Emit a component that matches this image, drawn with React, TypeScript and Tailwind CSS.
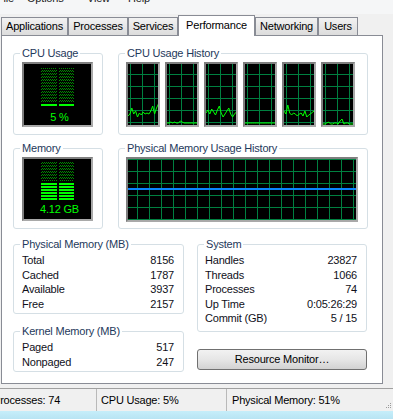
import React from "react";

const TABS = [
  { label: "Applications", w: "w-[67px]" },
  { label: "Processes", w: "w-[60px]" },
  { label: "Services", w: "w-[50px]" },
  { label: "Performance", w: "w-[77px]", active: true },
  { label: "Networking", w: "w-[63px]" },
  { label: "Users", w: "w-[40px]" },
];

const MENU = [
  { label: "File", w: "w-[30px]" },
  { label: "Options", w: "w-[60px]" },
  { label: "View", w: "w-[41px]" },
  { label: "Help", w: "w-[40px]" },
];

// y values (inside a 30x61 graph) for each logical CPU
const CPU_HISTORY = [
  [52, 50, 44, 50, 47, 53, 49, 51, 48, 50, 49, 50, 47, 42, 50, 44, 40],
  [59, 59, 58, 59, 58, 59, 59, 57, 58, 59, 59, 59, 59, 59, 59, 59, 59],
  [49, 46, 50, 45, 48, 51, 46, 42, 49, 53, 50, 47, 44, 50, 53, 50, 48],
  [59, 59, 59, 59, 59, 59, 59, 59, 59, 59, 59, 59, 59, 59, 59, 59, 59],
  [47, 50, 41, 49, 51, 49, 50, 52, 50, 49, 52, 47, 53, 51, 50, 48, 47],
  [60, 60, 59, 58, 60, 60, 59, 59, 60, 57, 55, 60, 59, 59, 60, 60, 60],
];

const PHYS = [
  ["Total", "8156"],
  ["Cached", "1787"],
  ["Available", "3937"],
  ["Free", "2157"],
];

const SYSTEM = [
  ["Handles", "23827"],
  ["Threads", "1066"],
  ["Processes", "74"],
  ["Up Time", "0:05:26:29"],
  ["Commit (GB)", "5 / 15"],
];

const KERNEL = [
  ["Paged", "517"],
  ["Nonpaged", "247"],
];

function Dots({ id, x, y, w, h }: { id: string; x: number; y: number; w: number; h: number }) {
  return (
    <>
      <defs>
        <pattern id={id} width="2" height="3" patternUnits="userSpaceOnUse">
          <rect x="0" y="0" width="1" height="1" fill="#008a00" />
          <rect x="1" y="1" width="1" height="1" fill="#008a00" />
        </pattern>
      </defs>
      <rect x={x} y={y} width={w} height={h} fill={`url(#${id})`} />
    </>
  );
}

function CpuMeter() {
  return (
    <div className="w-[71px] h-[65px] border-2 border-[#7f7f7f] border-r-[#a9a9a9] border-b-[#a9a9a9] bg-black flex flex-col items-center">
      <svg width="67" height="45" className="block">
        <Dots id="cpuL" x={17} y={4} w={16} h={34} />
        <Dots id="cpuR" x={35} y={4} w={15} h={34} />
        <rect x="17" y="40" width="16" height="2" fill="#00ff00" />
        <rect x="35" y="40" width="15" height="2" fill="#00ff00" />
      </svg>
      <div className="text-[#00ff00] text-[11px] leading-[12px] mt-[2px] pl-[4px]">5 %</div>
    </div>
  );
}

function MemMeter() {
  const bars = [24, 27, 30, 33, 36, 39];
  return (
    <div className="w-[71px] h-[64px] border-2 border-[#7f7f7f] border-r-[#a9a9a9] border-b-[#a9a9a9] bg-black flex flex-col items-center">
      <svg width="67" height="43" className="block">
        <Dots id="memL" x={17} y={3} w={16} h={19} />
        <Dots id="memR" x={35} y={3} w={15} h={19} />
        {bars.map((y) => (
          <g key={y}>
            <rect x="17" y={y} width="16" height="2" fill="#00ff00" />
            <rect x="35" y={y} width="15" height="2" fill="#00ff00" />
          </g>
        ))}
      </svg>
      <div className="text-[#00ff00] text-[11px] leading-[12px] mt-[1px] pl-[4px]">4.12 GB</div>
    </div>
  );
}

function CpuGraph({ data }: { data: number[] }) {
  const pts = data.map((v, i) => `${i * 1.9},${v}`).join(" ");
  return (
    <div className="w-[34px] h-[65px] border-2 border-[#7f7f7f] border-r-[#a9a9a9] border-b-[#a9a9a9] bg-black">
      <svg width="30" height="61" className="block">
        {[2, 14, 26].map((x) => (
          <line key={x} x1={x + 0.5} y1="0" x2={x + 0.5} y2="61" stroke="#008040" />
        ))}
        {[10, 22, 34, 46, 58].map((y) => (
          <line key={y} x1="0" y1={y + 0.5} x2="30" y2={y + 0.5} stroke="#008040" />
        ))}
        <polyline points={pts} fill="none" stroke="#00ff00" strokeWidth="1" />
      </svg>
    </div>
  );
}

function MemGraph() {
  const xs = Array.from({ length: 19 }, (_, i) => 9 + i * 12);
  const ys = [0, 12, 24, 36, 48, 60];
  return (
    <div className="w-[232px] h-[65px] border-2 border-[#7f7f7f] border-r-[#a9a9a9] border-b-[#a9a9a9] bg-black">
      <svg width="228" height="61" className="block">
        {xs.map((x) => (
          <line key={x} x1={x + 0.5} y1="0" x2={x + 0.5} y2="61" stroke="#008040" />
        ))}
        {ys.map((y) => (
          <line key={y} x1="0" y1={y + 0.5} x2="228" y2={y + 0.5} stroke="#008040" />
        ))}
        <rect x="0" y="29" width="228" height="2" fill="#0a84ff" />
      </svg>
    </div>
  );
}

function Group({
  title,
  className,
  children,
}: {
  title: string;
  className: string;
  children: React.ReactNode;
}) {
  return (
    <fieldset className={`border border-[#d5dfe5] rounded-[3px] min-w-0 ${className}`}>
      <legend className="ml-[6px] px-[2px] leading-[14px] text-[#1e395b]">{title}</legend>
      {children}
    </fieldset>
  );
}

function Rows({ rows, className }: { rows: string[][]; className: string }) {
  return (
    <div className={`flex flex-col ${className}`}>
      {rows.map(([k, v]) => (
        <div key={k} className="flex justify-between leading-[14.5px] text-[#10101a]">
          <span>{k}</span>
          <span>{v}</span>
        </div>
      ))}
    </div>
  );
}

export default function App() {
  return (
    <div className="w-[393px] h-[419px] overflow-hidden bg-[#f0f0f0] flex flex-col font-['Liberation_Sans',Arial,sans-serif] text-[11px] tracking-[-0.2px] text-black">
      {/* Menu bar, cut off at the top */}
      <div className="h-[15px] shrink-0 bg-[#f5f6f7] border-b border-[#f0f0f0]">
        <div className="flex -mt-[9px] -ml-[3px] leading-[14px] text-[#1a1a1a]">
          {MENU.map((m) => (
            <span key={m.label} className={`${m.w} shrink-0`}>
              {m.label}
            </span>
          ))}
        </div>
      </div>

      {/* Tabs */}
      <div className="h-[20px] shrink-0 flex items-end pl-[1px] relative z-10">
        {TABS.map((t) =>
          t.active ? (
            <div
              key={t.label}
              className={`${t.w} h-[21px] -mb-[1px] bg-white border border-b-0 border-[#898c95] flex items-center justify-center pb-[2px]`}
            >
              {t.label}
            </div>
          ) : (
            <div
              key={t.label}
              className={`${t.w} h-[18px] bg-gradient-to-b from-[#f2f2f2] to-[#dcdcdc] border border-b-0 border-[#898c95] flex items-center justify-center`}
            >
              {t.label}
            </div>
          )
        )}
      </div>

      {/* Panel */}
      <div className="flex pl-[1px] shrink-0">
        <div className="w-[382px] h-[349px] bg-white border border-[#898c95] pt-[10px] pl-[11px] flex flex-col">
          <div className="flex gap-[15px]">
            <Group title="CPU Usage" className="w-[90px] h-[89px]">
              <div className="pl-[8px] mt-[2px]">
                <CpuMeter />
              </div>
            </Group>
            <Group title="CPU Usage History" className="w-[250px] h-[89px]">
              <div className="pl-[7px] mt-[2px] flex gap-[5px]">
                {CPU_HISTORY.map((d, i) => (
                  <CpuGraph key={i} data={d} />
                ))}
              </div>
            </Group>
          </div>

          <div className="flex gap-[15px] mt-[6px]">
            <Group title="Memory" className="w-[90px] h-[88px]">
              <div className="pl-[8px] mt-[2px]">
                <MemMeter />
              </div>
            </Group>
            <Group title="Physical Memory Usage History" className="w-[250px] h-[88px]">
              <div className="pl-[7px] mt-[2px]">
                <MemGraph />
              </div>
            </Group>
          </div>

          <div className="flex gap-[13px] mt-[8px]">
            <div className="w-[171px] flex flex-col">
              <Group title="Physical Memory (MB)" className="h-[77px]">
                <Rows rows={PHYS} className="pl-[8px] pr-[9px] pt-[2px]" />
              </Group>
              <Group title="Kernel Memory (MB)" className="h-[48px] mt-[10px]">
                <Rows rows={KERNEL} className="pl-[8px] pr-[9px] pt-[2px]" />
              </Group>
            </div>
            <div className="w-[170px] flex flex-col">
              <Group title="System" className="h-[95px]">
                <Rows rows={SYSTEM} className="pl-[7px] pr-[9px] pt-[2px]" />
              </Group>
              <button className="mt-[17px] h-[21px] rounded-[3px] border border-[#707070] bg-gradient-to-b from-[#f2f2f2] via-[#e6e6e6] to-[#d2d2d2] text-black">
                Resource Monitor…
              </button>
            </div>
          </div>
        </div>
      </div>

      {/* Status bar */}
      <div className="mt-[4px] h-[23px] shrink-0 border-t border-[#a0a0a0] bg-[#f0f0f0] flex items-center relative">
        <div className="w-[97px] h-full flex items-center border-r border-[#b9b9b9]">
          <span className="-ml-[7px]">Processes: 74</span>
        </div>
        <div className="w-[130px] h-full flex items-center pl-[4px] border-r border-[#b9b9b9]">
          CPU Usage: 5%
        </div>
        <div className="flex-1 h-full flex items-center pl-[5px]">Physical Memory: 51%</div>
        <svg width="6" height="6" className="absolute right-[1px] bottom-[2px]">
          <rect x="4" y="0" width="1" height="1" fill="#9a9a9a" />
          <rect x="2" y="2" width="1" height="1" fill="#9a9a9a" />
          <rect x="4" y="2" width="1" height="1" fill="#9a9a9a" />
          <rect x="0" y="4" width="1" height="1" fill="#9a9a9a" />
          <rect x="2" y="4" width="1" height="1" fill="#9a9a9a" />
          <rect x="4" y="4" width="1" height="1" fill="#9a9a9a" />
        </svg>
      </div>

      {/* Window frame */}
      <div className="flex-1 bg-gradient-to-b from-[#c6eefa] to-[#b8e4f3]" />
    </div>
  );
}
